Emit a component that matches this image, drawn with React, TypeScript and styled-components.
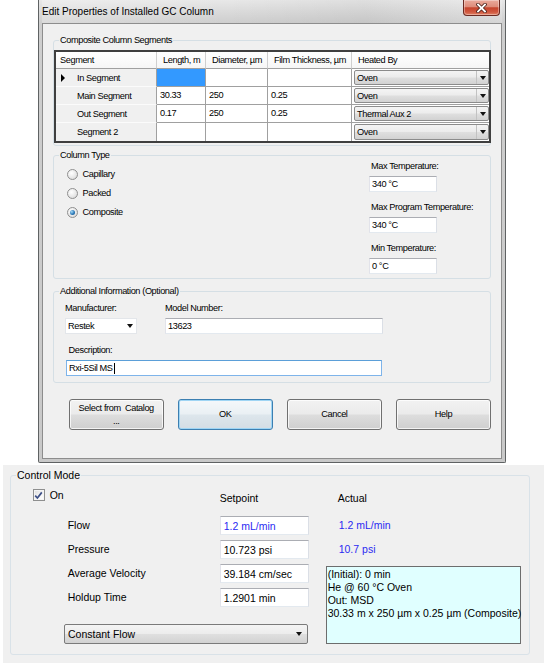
import React from "react";
import styled, { createGlobalStyle } from "styled-components";

const SANS = `"Liberation Sans", Arial, sans-serif`;

const GlobalStyle = createGlobalStyle`
  * { box-sizing: border-box; }
  html, body { margin: 0; padding: 0; background: #fff; }
  body { width: 551px; height: 663px; overflow: hidden; font-family: ${SANS}; color: #000; }
  #root { width: 551px; height: 663px; }
`;

const Page = styled.div`
  width: 551px;
  height: 663px;
  display: flex;
  flex-direction: column;
`;

/* ---------- window chrome ---------- */
const Window = styled.div`
  margin-left: 38px;
  width: 468px;
  height: 463px;
  flex: none;
  display: flex;
  flex-direction: column;
  padding: 0 3px 3px;
  border: 1px solid #5f6263;
  border-top: none;
  border-radius: 0 0 2px 2px;
  background: linear-gradient(180deg, #e8e8e8 0px, #dadada 12px, #cecece 23px, #c9c9c9 100%);
  font-family: ${SANS};
  font-size: 9.2px;
  letter-spacing: -0.4px;
`;

const TitleBar = styled.div`
  height: 23px;
  flex: none;
  display: flex;
  justify-content: space-between;
  align-items: flex-start;
  background: linear-gradient(90deg, rgba(255, 255, 255, 0.25), rgba(255, 255, 255, 0) 40%, rgba(0, 0, 0, 0.04) 70%, rgba(255, 255, 255, 0.15));
`;

const TitleText = styled.span`
  line-height: 23px;
  font-size: 10px;
  letter-spacing: 0;
  white-space: nowrap;
`;

const CloseButton = styled.div`
  width: 37px;
  height: 16px;
  margin-right: 2px;
  display: flex;
  align-items: center;
  justify-content: center;
  border: 1px solid #6b2a22;
  border-top: none;
  border-radius: 0 0 4px 4px;
  background: linear-gradient(180deg, #eaaa9c 0%, #de8d7b 45%, #c6442d 52%, #d0583f 80%, #e08266 100%);
  box-shadow: inset 0 0 0 1px rgba(255, 255, 255, 0.35);
`;

const Client = styled.div`
  flex: 1;
  display: flex;
  flex-direction: column;
  background: #f0f0f0;
  border: 1px solid #8d8d8d;
  padding: 10px 10px 0;
`;

const Group = styled.fieldset<{ $mt?: number }>`
  margin: ${(p) => p.$mt ?? 0}px 0 0 0;
  padding: 0;
  min-width: 0;
  border: 1px solid #d5dfe5;
  border-radius: 3px;
`;

const Legend = styled.legend`
  margin-left: 5px;
  padding: 0 1px;
  line-height: 12px;
  white-space: nowrap;
`;

/* ---------- segments table ---------- */
const SegmentsBody = styled.div`
  padding: 4px 0 2px 0;
`;

const SegGrid = styled.div`
  display: grid;
  grid-template-columns: 101px 49px 62px 84px 137px;
  grid-template-rows: 17px repeat(4, 18px);
  width: 437px;
  border: 2px solid #3f3f3f;
  background: #fff;
`;

const HeadCell = styled.div<{ $pl: number; $last?: boolean }>`
  padding-left: ${(p) => p.$pl}px;
  line-height: 16px;
  white-space: nowrap;
  overflow: hidden;
  border-bottom: 1px solid #a0a0a0;
  border-right: ${(p) => (p.$last ? "none" : "1px solid #cfcfcf")};
  background: linear-gradient(180deg, #ffffff, #f6f6f6);
`;

const RowHead = styled.div<{ $last?: boolean }>`
  display: flex;
  align-items: center;
  padding-left: 5px;
  background: #f0f0f0;
  border-right: 1px solid #a0a0a0;
  border-bottom: ${(p) => (p.$last ? "none" : "1px solid #fbfbfb")};
  white-space: nowrap;
`;

const MarkerSlot = styled.span`
  width: 16px;
  flex: none;
  display: flex;
  align-items: center;
`;

const Marker = styled.span`
  width: 0;
  height: 0;
  border-left: 4px solid #000;
  border-top: 4px solid transparent;
  border-bottom: 4px solid transparent;
`;

const DataCell = styled.div<{ $selected?: boolean; $last?: boolean }>`
  padding-left: 3px;
  line-height: 17px;
  white-space: nowrap;
  background: ${(p) => (p.$selected ? "#3399ff" : "#fff")};
  border-right: 1px solid #a0a0a0;
  border-bottom: ${(p) => (p.$last ? "none" : "1px solid #a0a0a0")};
`;

const ComboCell = styled.div<{ $last?: boolean }>`
  padding: 1px 0 1px 2px;
  border-bottom: ${(p) => (p.$last ? "none" : "1px solid #a0a0a0")};
`;

const GrayCombo = styled.div<{ $h?: number }>`
  height: ${(p) => (p.$h ? `${p.$h}px` : "100%")};
  display: flex;
  border: 1px solid #8b8b8b;
  border-radius: 2px;
  background: linear-gradient(180deg, #f4f4f4 0%, #ececec 48%, #dfdfdf 52%, #d2d2d2 100%);
`;

const ComboText = styled.span`
  flex: 1;
  display: flex;
  align-items: center;
  padding-left: 2px;
  white-space: nowrap;
`;

const ComboArrowBox = styled.span<{ $w?: number; $sep?: boolean }>`
  width: ${(p) => p.$w ?? 12}px;
  flex: none;
  display: flex;
  align-items: center;
  justify-content: center;
  border-left: ${(p) => (p.$sep ? "1px solid #c2c2c2" : "none")};
`;

const Arrow = styled.span`
  width: 0;
  height: 0;
  border-left: 3.5px solid transparent;
  border-right: 3.5px solid transparent;
  border-top: 4px solid #111;
`;

/* ---------- column type ---------- */
const TypeBody = styled.div`
  display: flex;
  padding-bottom: 4px;
`;

const RadioList = styled.div`
  flex: 1;
  display: flex;
  flex-direction: column;
  padding: 3.5px 0 0 12.5px;
`;

const RadioRow = styled.div`
  height: 19px;
  display: flex;
  align-items: center;
  gap: 5px;
  white-space: nowrap;
`;

const RadioDot = styled.span<{ $checked?: boolean }>`
  width: 11px;
  height: 11px;
  flex: none;
  border-radius: 50%;
  border: 1px solid #8f8f8f;
  background: radial-gradient(circle at 40% 35%, #ffffff 0%, #e6e6e6 60%, #cfcfcf 100%);
  display: flex;
  align-items: center;
  justify-content: center;
  &::after {
    content: "";
    display: ${(p) => (p.$checked ? "block" : "none")};
    width: 5px;
    height: 5px;
    border-radius: 50%;
    background: radial-gradient(circle at 35% 35%, #a8dcf8 0%, #2a78b8 55%, #174f80 100%);
  }
`;

const TempCol = styled.div`
  width: 121px;
  flex: none;
  display: flex;
  flex-direction: column;
  gap: 10px;
`;

const TempBlock = styled.div`
  display: flex;
  flex-direction: column;
`;

const FieldLabel = styled.div<{ $ml?: number }>`
  height: 10px;
  line-height: 10px;
  margin-left: ${(p) => p.$ml ?? 0}px;
  margin-bottom: 5px;
  white-space: nowrap;
`;

const TextBox = styled.div<{ $w: number; $h?: number; $focus?: boolean; $ml?: number }>`
  width: ${(p) => p.$w}px;
  height: ${(p) => p.$h ?? 16}px;
  margin-left: ${(p) => p.$ml ?? 0}px;
  display: flex;
  align-items: center;
  padding-left: 2px;
  background: #fff;
  border: 1px solid;
  border-color: ${(p) => (p.$focus ? "#5b9fd8 #7eb4ea #7eb4ea #7eb4ea" : "#abadb3 #dbdfe6 #e3e9ef #e2e3ea")};
  white-space: nowrap;
`;

const Caret = styled.span`
  display: inline-block;
  width: 1px;
  height: 11px;
  background: #000;
  margin-left: 1px;
`;

/* ---------- additional info ---------- */
const InfoBody = styled.div`
  display: flex;
  flex-direction: column;
  padding: 6px 0 6px 11px;
`;

const InfoTopRow = styled.div`
  display: grid;
  grid-template-columns: 100px 218px;
`;

const FieldStack = styled.div`
  display: flex;
  flex-direction: column;
`;

const DescStack = styled.div`
  display: flex;
  flex-direction: column;
  margin-top: 11px;
`;

const WhiteCombo = styled.div`
  width: 72px;
  height: 16px;
  display: flex;
  background: #fff;
  border: 1px solid #e3e6ea;
`;

/* ---------- buttons ---------- */
const ButtonRow = styled.div`
  display: flex;
  gap: 14px;
  margin-top: 16px;
  padding-left: 15.7px;
`;

const Button = styled.div<{ $default?: boolean }>`
  width: 96px;
  height: 31px;
  display: flex;
  flex-direction: column;
  align-items: center;
  justify-content: center;
  text-align: center;
  line-height: 13px;
  white-space: nowrap;
  border: 1px solid ${(p) => (p.$default ? "#3c7fb1" : "#707070")};
  border-radius: 3px;
  background: ${(p) =>
    p.$default
      ? "linear-gradient(180deg, #f4f8fb 0%, #eaf0f4 48%, #dde6ec 52%, #d4dde4 100%)"
      : "linear-gradient(180deg, #f2f2f2 0%, #ebebeb 48%, #dddddd 52%, #cfcfcf 100%)"};
  box-shadow: inset 0 0 0 1px ${(p) => (p.$default ? "#9fd5f4" : "rgba(255,255,255,0.75)")};
`;

/* ---------- lower panel ---------- */
const LowerPanel = styled.div`
  margin: 2px 0 0 3px;
  width: 541px;
  flex: 1;
  display: flex;
  background: #f0f0f0;
  padding: 4px 14px 8px 7px;
  font-family: ${SANS};
  font-size: 10.5px;
`;

const ControlGroup = styled(Group)`
  flex: 1;
  border-color: #d9e2e8;
`;

const ControlGrid = styled.div`
  display: grid;
  grid-template-columns: 35px 152px 89px 17px 195px;
  grid-template-rows: 16px 31px 24px 24px 24px 37px;
  padding: 7px 0 0 21.7px;
`;

const CheckCell = styled.div`
  grid-column: 1 / 3;
  grid-row: 1;
  align-self: start;
  margin-top: 1px;
  display: flex;
  align-items: center;
  gap: 5px;
  line-height: 12px;
`;

const CheckBox = styled.span`
  width: 12px;
  height: 12px;
  flex: none;
  display: flex;
  align-items: center;
  justify-content: center;
  border: 1px solid #8e8f8f;
  background: linear-gradient(135deg, #dcdcdc 0%, #f6f6f6 60%, #ffffff 100%);
  box-shadow: inset 0 0 0 1px #f4f4f4;
`;

const ColHead = styled.div<{ $col: number; $pl?: number }>`
  grid-column: ${(p) => p.$col};
  grid-row: 1;
  align-self: end;
  line-height: 12px;
  padding-left: ${(p) => p.$pl ?? 0}px;
`;

const RowLabel = styled.div<{ $row: number }>`
  grid-column: 2;
  grid-row: ${(p) => p.$row};
  align-self: end;
  line-height: 19px;
  white-space: nowrap;
`;

const ValueBox = styled.div<{ $row: number; $blue?: boolean }>`
  grid-column: 3;
  grid-row: ${(p) => p.$row};
  align-self: end;
  height: 19px;
  display: flex;
  align-items: center;
  padding-left: 3px;
  background: #fff;
  border: 1px solid;
  border-color: #abadb3 #dbdfe6 #e3e9ef #e2e3ea;
  color: ${(p) => (p.$blue ? "#2a2af2" : "#000")};
  white-space: nowrap;
`;

const ActualValue = styled.div<{ $row: number }>`
  grid-column: 5;
  grid-row: ${(p) => p.$row};
  align-self: end;
  line-height: 19px;
  padding-left: 13px;
  color: #2a2af2;
`;

const InfoBox = styled.div`
  grid-column: 5;
  grid-row: 4 / 7;
  margin-top: 7px;
  background: #e0ffff;
  border: 1px solid #6d6d6d;
  padding: 1px 0 0 1px;
  line-height: 13px;
  white-space: nowrap;
`;

const ModeCombo = styled(GrayCombo)`
  grid-column: 2 / 4;
  grid-row: 6;
  align-self: end;
  margin-left: -3.7px;
  margin-right: 1px;
  border-color: #7a7a7a;
`;

const ModeText = styled(ComboText)`
  padding-left: 3px;
`;

const CloseGlyph = () => (
  <svg width="11" height="10" viewBox="0 0 11 10">
    <path d="M2 1.5 L9 8.5 M9 1.5 L2 8.5" stroke="#4a2018" strokeWidth="3.4" strokeLinecap="square" />
    <path d="M2 1.5 L9 8.5 M9 1.5 L2 8.5" stroke="#ffffff" strokeWidth="1.8" strokeLinecap="square" />
  </svg>
);

const CheckMark = () => (
  <svg width="9" height="9" viewBox="0 0 9 9">
    <path d="M1.2 4.6 L3.4 7 L7.8 1.4" stroke="#3d4f86" strokeWidth="1.7" fill="none" />
  </svg>
);

const segments = [
  { name: "In Segment", len: "", dia: "", film: "", heat: "Oven", current: true },
  { name: "Main Segment", len: "30.33", dia: "250", film: "0.25", heat: "Oven" },
  { name: "Out Segment", len: "0.17", dia: "250", film: "0.25", heat: "Thermal Aux 2" },
  { name: "Segment 2", len: "", dia: "", film: "", heat: "Oven" },
];

const temps = [
  { label: "Max Temperature:", value: "340 °C" },
  { label: "Max Program Temperature:", value: "340 °C" },
  { label: "Min Temperature:", value: "0 °C" },
];

const controlRows = [
  { label: "Flow", value: "1.2 mL/min", blue: true, actual: "1.2 mL/min" },
  { label: "Pressure", value: "10.723 psi", actual: "10.7 psi" },
  { label: "Average Velocity", value: "39.184 cm/sec" },
  { label: "Holdup Time", value: "1.2901 min" },
];

export default function App() {
  return (
    <Page>
      <GlobalStyle />
      <Window>
        <TitleBar>
          <TitleText>Edit Properties of Installed GC Column</TitleText>
          <CloseButton>
            <CloseGlyph />
          </CloseButton>
        </TitleBar>
        <Client>
          <Group>
            <Legend>Composite Column Segments</Legend>
            <SegmentsBody>
              <SegGrid>
                <HeadCell $pl={4}>Segment</HeadCell>
                <HeadCell $pl={6}>Length, m</HeadCell>
                <HeadCell $pl={6}>Diameter, µm</HeadCell>
                <HeadCell $pl={6}>Film Thickness, µm</HeadCell>
                <HeadCell $pl={6} $last>
                  Heated By
                </HeadCell>
                {segments.map((s, i) => {
                  const last = i === segments.length - 1;
                  return (
                    <React.Fragment key={s.name}>
                      <RowHead $last={last}>
                        <MarkerSlot>{s.current && <Marker />}</MarkerSlot>
                        {s.name}
                      </RowHead>
                      <DataCell $selected={s.current} $last={last}>
                        {s.len}
                      </DataCell>
                      <DataCell $last={last}>{s.dia}</DataCell>
                      <DataCell $last={last}>{s.film}</DataCell>
                      <ComboCell $last={last}>
                        <GrayCombo>
                          <ComboText>{s.heat}</ComboText>
                          <ComboArrowBox $sep>
                            <Arrow />
                          </ComboArrowBox>
                        </GrayCombo>
                      </ComboCell>
                    </React.Fragment>
                  );
                })}
              </SegGrid>
            </SegmentsBody>
          </Group>

          <Group $mt={3}>
            <Legend>Column Type</Legend>
            <TypeBody>
              <RadioList>
                <RadioRow>
                  <RadioDot />
                  Capillary
                </RadioRow>
                <RadioRow>
                  <RadioDot />
                  Packed
                </RadioRow>
                <RadioRow>
                  <RadioDot $checked />
                  Composite
                </RadioRow>
              </RadioList>
              <TempCol>
                {temps.map((t) => (
                  <TempBlock key={t.label}>
                    <FieldLabel $ml={2}>{t.label}</FieldLabel>
                    <TextBox $w={68}>{t.value}</TextBox>
                  </TempBlock>
                ))}
              </TempCol>
            </TypeBody>
          </Group>

          <Group $mt={6}>
            <Legend>Additional Information (Optional)</Legend>
            <InfoBody>
              <InfoTopRow>
                <FieldStack>
                  <FieldLabel>Manufacturer:</FieldLabel>
                  <WhiteCombo>
                    <ComboText>Restek</ComboText>
                    <ComboArrowBox $w={12}>
                      <Arrow />
                    </ComboArrowBox>
                  </WhiteCombo>
                </FieldStack>
                <FieldStack>
                  <FieldLabel>Model Number:</FieldLabel>
                  <TextBox $w={218}>13623</TextBox>
                </FieldStack>
              </InfoTopRow>
              <DescStack>
                <FieldLabel $ml={3.5}>Description:</FieldLabel>
                <TextBox $w={316} $ml={1} $focus>
                  Rxi-5Sil MS
                  <Caret />
                </TextBox>
              </DescStack>
            </InfoBody>
          </Group>

          <ButtonRow>
            <Button>
              <span>Select from&nbsp; Catalog</span>
              <span>...</span>
            </Button>
            <Button $default>OK</Button>
            <Button>Cancel</Button>
            <Button>Help</Button>
          </ButtonRow>
        </Client>
      </Window>

      <LowerPanel>
        <ControlGroup>
          <Legend>Control Mode</Legend>
          <ControlGrid>
            <CheckCell>
              <CheckBox>
                <CheckMark />
              </CheckBox>
              On
            </CheckCell>
            <ColHead $col={3}>Setpoint</ColHead>
            <ColHead $col={5} $pl={12}>
              Actual
            </ColHead>
            {controlRows.map((r, i) => (
              <React.Fragment key={r.label}>
                <RowLabel $row={i + 2}>{r.label}</RowLabel>
                <ValueBox $row={i + 2} $blue={r.blue}>
                  {r.value}
                </ValueBox>
                {r.actual && <ActualValue $row={i + 2}>{r.actual}</ActualValue>}
              </React.Fragment>
            ))}
            <InfoBox>
              (Initial): 0 min
              <br />
              He @ 60 °C Oven
              <br />
              Out: MSD
              <br />
              30.33 m x 250 µm x 0.25 µm (Composite)
            </InfoBox>
            <ModeCombo $h={20}>
              <ModeText>Constant Flow</ModeText>
              <ComboArrowBox $w={16}>
                <Arrow />
              </ComboArrowBox>
            </ModeCombo>
          </ControlGrid>
        </ControlGroup>
      </LowerPanel>
    </Page>
  );
}
